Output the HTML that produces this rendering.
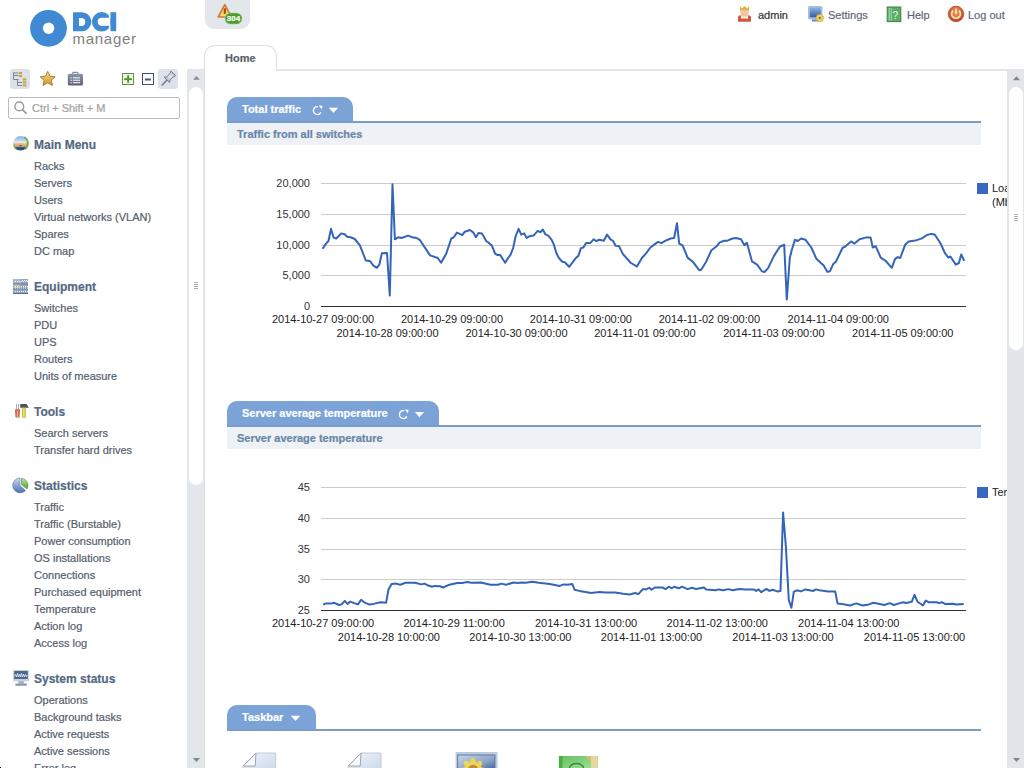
<!DOCTYPE html>
<html><head><meta charset="utf-8">
<style>
*{margin:0;padding:0;box-sizing:border-box}
html,body{width:1024px;height:768px;overflow:hidden;background:#fff;font-family:"Liberation Sans",sans-serif}
.a{position:absolute}
.t{position:absolute;white-space:nowrap;line-height:17px;font-size:11px;-webkit-text-stroke:0.2px currentColor}
.mi{color:#545e6c;left:34px}
.mh{color:#546983;left:34px;font-weight:bold;font-size:12px}
.hd{color:#5d6878;font-size:11px}
</style></head><body>
<!-- logo -->

<div class="t" style="left:72.5px;top:30px;font-size:15px;line-height:18px;color:#808080;letter-spacing:0.72px;-webkit-text-stroke:0">manager</div>

<!-- alert tab -->
<div class="a" style="left:205px;top:0;width:45px;height:29px;background:#e3e7ec;border-radius:0 0 9px 9px"></div>

<!-- top right -->
<div class="t" style="left:758px;top:7px;color:#333">admin</div>
<div class="t hd" style="left:828px;top:7px">Settings</div>
<div class="t hd" style="left:907px;top:7px">Help</div>
<div class="t hd" style="left:968px;top:7px">Log out</div>

<!-- sidebar toolbar -->
<div class="a" style="left:10px;top:69px;width:20px;height:20px;border-radius:3px;background:#dde2ea"></div>
<div class="a" style="left:158px;top:69px;width:20px;height:20px;border-radius:3px;background:#dde2ea"></div>
<div class="a" style="left:122px;top:73px;width:12px;height:12px;border:1px solid #668a4a;background:#f0f8ec"></div>
<div class="a" style="left:142px;top:73px;width:12px;height:12px;border:1px solid #3d5170;background:#fff"></div>
<!-- search -->
<div class="a" style="left:8px;top:97px;width:172px;height:22px;border:1px solid #bcbcbc;border-radius:2px"></div>
<div class="t" style="left:32px;top:100px;color:#a0a0a0">Ctrl + Shift + M</div>

<!-- menu -->
<div class="t mh" style="top:137px">Main Menu</div>
<div class="t mi" style="top:158px">Racks</div>
<div class="t mi" style="top:175px">Servers</div>
<div class="t mi" style="top:192px">Users</div>
<div class="t mi" style="top:209px">Virtual networks (VLAN)</div>
<div class="t mi" style="top:226px">Spares</div>
<div class="t mi" style="top:243px">DC map</div>

<div class="t mh" style="top:279px">Equipment</div>
<div class="t mi" style="top:300px">Switches</div>
<div class="t mi" style="top:317px">PDU</div>
<div class="t mi" style="top:334px">UPS</div>
<div class="t mi" style="top:351px">Routers</div>
<div class="t mi" style="top:368px">Units of measure</div>

<div class="t mh" style="top:404px">Tools</div>
<div class="t mi" style="top:425px">Search servers</div>
<div class="t mi" style="top:442px">Transfer hard drives</div>

<div class="t mh" style="top:478px">Statistics</div>
<div class="t mi" style="top:499px">Traffic</div>
<div class="t mi" style="top:516px">Traffic (Burstable)</div>
<div class="t mi" style="top:533px">Power consumption</div>
<div class="t mi" style="top:550px">OS installations</div>
<div class="t mi" style="top:567px">Connections</div>
<div class="t mi" style="top:584px">Purchased equipment</div>
<div class="t mi" style="top:601px">Temperature</div>
<div class="t mi" style="top:618px">Action log</div>
<div class="t mi" style="top:635px">Access log</div>

<div class="t mh" style="top:671px">System status</div>
<div class="t mi" style="top:692px">Operations</div>
<div class="t mi" style="top:709px">Background tasks</div>
<div class="t mi" style="top:726px">Active requests</div>
<div class="t mi" style="top:743px">Active sessions</div>
<div class="t mi" style="top:760px">Error log</div>

<!-- left scrollbar -->
<div class="a" style="left:187px;top:69px;width:17px;height:699px;background:#e3e7ec"></div>
<div class="a" style="left:189px;top:87px;width:14px;height:398px;background:#fff;border-radius:7px"></div>

<!-- home tab -->
<div class="a" style="left:204px;top:45px;width:73px;height:26px;border:1px solid #dcdfe3;border-bottom:none;border-radius:11px 11px 0 0;background:#fff"></div>
<div class="a" style="left:276px;top:69px;width:748px;height:2px;background:#e2e4e8"></div>
<div class="a" style="left:204px;top:69px;width:1px;height:699px;background:#dcdfe3"></div>
<div class="t" style="left:225px;top:50px;font-weight:bold;color:#5a616c">Home</div>

<!-- CHARTS -->
<svg class="a" style="left:0;top:0" width="1007" height="768" viewBox="0 0 1007 768" font-family="Liberation Sans, sans-serif" font-size="11">
<line x1="321" y1="183.5" x2="966" y2="183.5" stroke="#cccccc" stroke-width="1"/>
<line x1="321" y1="214.5" x2="966" y2="214.5" stroke="#cccccc" stroke-width="1"/>
<line x1="321" y1="245.5" x2="966" y2="245.5" stroke="#cccccc" stroke-width="1"/>
<line x1="321" y1="275.5" x2="966" y2="275.5" stroke="#cccccc" stroke-width="1"/>
<line x1="321" y1="306.5" x2="966" y2="306.5" stroke="#333333" stroke-width="1"/>
<text x="310" y="187" text-anchor="end" fill="#333">20,000</text>
<text x="310" y="218" text-anchor="end" fill="#333">15,000</text>
<text x="310" y="249" text-anchor="end" fill="#333">10,000</text>
<text x="310" y="279" text-anchor="end" fill="#333">5,000</text>
<text x="310" y="310" text-anchor="end" fill="#333">0</text>
<text x="272.0" y="323" fill="#222">2014-10-27 09:00:00</text>
<text x="336.4" y="337" fill="#222">2014-10-28 09:00:00</text>
<text x="400.9" y="323" fill="#222">2014-10-29 09:00:00</text>
<text x="465.4" y="337" fill="#222">2014-10-30 09:00:00</text>
<text x="529.8" y="323" fill="#222">2014-10-31 09:00:00</text>
<text x="594.2" y="337" fill="#222">2014-11-01 09:00:00</text>
<text x="658.7" y="323" fill="#222">2014-11-02 09:00:00</text>
<text x="723.2" y="337" fill="#222">2014-11-03 09:00:00</text>
<text x="787.6" y="323" fill="#222">2014-11-04 09:00:00</text>
<text x="852.1" y="337" fill="#222">2014-11-05 09:00:00</text>
<path d="M322.6 248.7 L326.0 243.6 L328.5 241.0 L331.0 228.8 L333.6 237.6 L336.2 238.5 L341.2 233.4 L344.6 234.3 L347.2 236.8 L350.6 237.3 L354.8 239.0 L359.9 245.3 L365.8 260.5 L370.0 261.0 L373.4 265.6 L376.8 267.8 L379.3 264.7 L381.9 253.2 L387.0 252.9 L389.8 295.6 L392.5 184.3 L394.9 239.3 L398.0 237.3 L401.4 238.0 L408.1 235.6 L413.2 237.6 L416.6 238.0 L420.0 240.2 L430.1 255.4 L437.8 258.0 L441.1 262.7 L446.2 253.7 L451.3 238.5 L453.8 237.3 L456.9 232.6 L462.3 235.1 L464.8 231.7 L470.0 230.0 L473.4 232.6 L475.9 237.3 L478.5 232.9 L481.9 233.4 L483.5 236.0 L486.1 241.0 L488.6 242.7 L492.0 245.8 L495.1 253.7 L497.1 254.9 L500.1 254.9 L505.2 262.7 L508.1 258.0 L510.6 254.6 L513.2 247.8 L515.7 236.0 L518.6 228.8 L521.3 234.6 L524.2 233.4 L526.7 238.0 L529.3 236.3 L533.5 235.6 L537.7 230.9 L540.3 232.2 L542.8 229.5 L545.3 234.3 L548.2 235.6 L551.3 239.3 L553.8 244.4 L556.4 253.2 L558.9 258.0 L562.3 261.7 L564.8 262.2 L569.1 266.8 L572.4 262.7 L575.8 258.0 L578.4 255.9 L580.9 248.1 L583.4 247.5 L586.0 243.1 L590.2 243.1 L593.6 239.3 L596.1 241.0 L599.5 239.7 L603.8 240.7 L607.1 234.6 L610.5 239.3 L613.1 241.0 L615.6 245.8 L619.0 246.1 L623.2 254.6 L625.0 256.3 L630.9 263.0 L636.9 266.4 L641.9 258.0 L646.2 253.2 L650.4 247.5 L654.6 244.4 L658.0 241.9 L661.4 243.1 L666.5 240.2 L670.7 238.5 L674.1 238.0 L677.0 223.3 L679.2 243.6 L682.6 245.3 L687.6 257.6 L692.7 261.7 L699.2 270.2 L701.2 269.8 L706.3 261.4 L711.4 250.3 L716.4 246.5 L719.8 242.4 L724.1 240.7 L727.4 240.7 L732.5 238.5 L735.9 238.0 L741.0 239.3 L744.4 245.3 L746.9 242.7 L752.0 261.4 L757.1 264.7 L762.1 271.5 L764.7 271.9 L768.1 268.1 L774.0 255.9 L780.0 246.5 L784.2 244.8 L786.8 299.5 L789.8 258.0 L791.9 249.5 L794.9 239.7 L797.8 241.0 L801.2 238.5 L805.4 239.7 L811.3 247.5 L816.4 258.8 L820.6 262.7 L823.7 265.6 L827.4 271.9 L830.0 271.2 L833.3 263.9 L835.9 261.7 L842.6 247.8 L845.2 246.5 L851.1 241.4 L854.5 243.6 L859.6 239.3 L865.5 237.6 L870.6 237.6 L872.8 247.5 L875.7 246.1 L880.7 257.6 L885.8 261.0 L891.8 267.8 L895.1 258.8 L897.7 257.1 L900.2 258.0 L905.3 244.4 L908.7 241.4 L915.2 240.6 L922.0 238.4 L927.0 235.0 L931.3 233.9 L934.7 234.5 L940.6 243.5 L944.8 252.8 L948.2 257.5 L950.4 256.5 L955.8 264.6 L958.9 263.0 L961.2 254.5 L964.3 260.9" fill="none" stroke="#3464b8" stroke-width="2" stroke-linejoin="round"/>
<rect x="977" y="183" width="11" height="11" fill="#3868c4"/>
<text x="992" y="192" fill="#222">Load</text>
<text x="992" y="206" fill="#222">(Mbit/s)</text>
<line x1="321" y1="487.5" x2="966" y2="487.5" stroke="#cccccc" stroke-width="1"/>
<line x1="321" y1="518.5" x2="966" y2="518.5" stroke="#cccccc" stroke-width="1"/>
<line x1="321" y1="549.5" x2="966" y2="549.5" stroke="#cccccc" stroke-width="1"/>
<line x1="321" y1="579.5" x2="966" y2="579.5" stroke="#cccccc" stroke-width="1"/>
<line x1="321" y1="610.5" x2="966" y2="610.5" stroke="#333333" stroke-width="1"/>
<text x="310" y="491" text-anchor="end" fill="#333">45</text>
<text x="310" y="522" text-anchor="end" fill="#333">40</text>
<text x="310" y="553" text-anchor="end" fill="#333">35</text>
<text x="310" y="583" text-anchor="end" fill="#333">30</text>
<text x="310" y="614" text-anchor="end" fill="#333">25</text>
<text x="272.0" y="627" fill="#222">2014-10-27 09:00:00</text>
<text x="337.8" y="641" fill="#222">2014-10-28 10:00:00</text>
<text x="403.5" y="627" fill="#222">2014-10-29 11:00:00</text>
<text x="469.3" y="641" fill="#222">2014-10-30 13:00:00</text>
<text x="535.0" y="627" fill="#222">2014-10-31 13:00:00</text>
<text x="600.8" y="641" fill="#222">2014-11-01 13:00:00</text>
<text x="666.6" y="627" fill="#222">2014-11-02 13:00:00</text>
<text x="732.3" y="641" fill="#222">2014-11-03 13:00:00</text>
<text x="798.1" y="627" fill="#222">2014-11-04 13:00:00</text>
<text x="863.8" y="641" fill="#222">2014-11-05 13:00:00</text>
<path d="M323.1 604.7 L325.9 603.4 L330.6 603.6 L333.8 602.7 L339.2 605.0 L341.6 604.4 L344.7 600.8 L347.5 603.9 L350.2 601.6 L354.1 603.1 L358.0 604.4 L361.1 599.7 L364.2 602.3 L368.9 604.4 L373.6 603.9 L380.6 602.3 L386.1 602.8 L388.4 589.8 L391.6 584.1 L396.3 583.6 L400.2 584.7 L405.6 582.8 L415.0 582.8 L421.3 584.4 L424.4 583.6 L427.5 585.2 L432.2 586.7 L434.5 585.9 L440.0 586.3 L443.1 587.5 L449.4 584.7 L457.2 583.1 L461.9 583.1 L467.3 582.0 L471.3 582.8 L480.9 582.5 L490.3 584.7 L498.1 584.7 L501.3 583.6 L505.9 584.7 L513.8 582.5 L517.7 583.1 L521.6 582.5 L525.5 582.8 L532.5 581.7 L538.8 582.8 L549.7 584.1 L559.8 585.9 L563.8 584.4 L567.7 584.7 L572.3 584.1 L574.7 589.8 L579.4 590.9 L585.6 591.9 L591.1 593.0 L595.0 592.5 L599.7 591.9 L605.9 592.5 L615.3 592.5 L623.1 593.8 L629.7 594.5 L635.2 593.0 L638.3 594.1 L643.0 589.1 L646.1 589.4 L649.2 587.8 L651.6 589.8 L654.7 587.5 L662.5 587.5 L665.6 589.1 L668.8 586.7 L671.9 588.3 L674.2 586.7 L678.9 588.3 L682.0 586.7 L687.5 589.1 L692.2 587.8 L696.1 589.1 L703.9 587.5 L706.2 589.4 L715.6 590.3 L718.8 589.4 L723.4 590.3 L728.1 589.1 L732.8 590.3 L739.1 589.1 L745.3 589.4 L753.9 589.4 L756.2 590.9 L758.6 589.4 L761.2 592.2 L766.4 588.8 L769.5 590.9 L772.7 589.8 L777.3 591.4 L780.5 590.9 L783.1 512.5 L785.9 546.9 L788.8 600.0 L791.4 607.8 L793.8 591.9 L796.9 590.3 L800.8 591.4 L805.5 589.4 L813.3 590.9 L815.9 589.4 L819.5 590.3 L828.1 591.4 L835.2 591.4 L837.5 603.4 L842.2 603.9 L850.0 605.5 L856.2 603.4 L862.5 605.5 L868.8 604.4 L873.4 602.8 L884.4 605.0 L889.8 603.1 L893.8 605.0 L900.0 603.1 L903.1 602.2 L906.2 603.0 L911.7 601.8 L914.5 594.8 L917.6 601.8 L923.0 605.5 L925.8 600.6 L928.5 602.2 L936.7 602.2 L939.0 603.1 L941.8 602.2 L944.9 603.9 L953.1 603.8 L956.2 604.4 L963.7 604.1" fill="none" stroke="#3464b8" stroke-width="2" stroke-linejoin="round"/>
<rect x="977" y="487" width="11" height="11" fill="#3868c4"/>
<text x="992" y="496" fill="#222">Temperature</text>
</svg>
<!-- /CHARTS -->
<!-- right scrollbar -->
<div class="a" style="left:1007px;top:71px;width:17px;height:697px;background:#e2e6eb"></div>
<div class="a" style="left:1009px;top:87px;width:14px;height:263px;background:#fff;border-radius:7px"></div>
<svg class="a" style="left:1007px;top:71px" width="17" height="697" viewBox="1007 71 17 697">
 <path d="M1012.9 80.2L1016.5 76.2L1020.1 80.2Z" fill="#7c8793"/>
 <path d="M1012.9 758L1020.1 758L1016.5 762Z" fill="#7c8793"/>
 <g fill="#9a9a9a"><rect x="1014" y="214" width="4" height="0.8"/><rect x="1014" y="216" width="4" height="0.8"/><rect x="1014" y="218" width="4" height="0.8"/><rect x="1014" y="220" width="4" height="0.8"/></g>
</svg>

<!-- panel 1 -->
<div class="a" style="left:227px;top:97px;width:126px;height:25px;background:#7ba3d8;border-radius:10px 10px 0 0"></div>
<div class="a" style="left:227px;top:121px;width:754px;height:2px;background:#7b9ccb"></div>
<div class="a" style="left:227px;top:123px;width:754px;height:22px;background:#eef1f5"></div>
<div class="t" style="left:242px;top:101px;color:#fff;font-weight:bold">Total traffic</div>
<div class="t" style="left:237px;top:126px;color:#6a85a6;font-weight:bold">Traffic from all switches</div>

<!-- panel 2 -->
<div class="a" style="left:227px;top:401px;width:212px;height:25px;background:#7ba3d8;border-radius:10px 10px 0 0"></div>
<div class="a" style="left:227px;top:425px;width:754px;height:2px;background:#7b9ccb"></div>
<div class="a" style="left:227px;top:427px;width:754px;height:22px;background:#eef1f5"></div>
<div class="t" style="left:242px;top:405px;color:#fff;font-weight:bold">Server average temperature</div>
<div class="t" style="left:237px;top:430px;color:#6a85a6;font-weight:bold">Server average temperature</div>

<!-- taskbar -->
<div class="a" style="left:227px;top:705px;width:89px;height:25px;background:#7ba3d8;border-radius:10px 10px 0 0"></div>
<div class="a" style="left:227px;top:729px;width:754px;height:2px;background:#7b9ccb"></div>
<div class="t" style="left:242px;top:709px;color:#fff;font-weight:bold">Taskbar</div>

<svg class="a" style="left:0;top:0" width="1006" height="768" viewBox="0 0 1006 768">
<path d="M320.84 112.43A3.9 3.9 0 1 1 318.08 106.76" fill="none" stroke="#fff" stroke-width="1.3"/><path d="M318.70 105.50L322.50 105.80L322.00 109.40Z" fill="#fff"/>
<path d="M406.84 416.43A3.9 3.9 0 1 1 404.08 410.76" fill="none" stroke="#fff" stroke-width="1.3"/><path d="M404.70 409.50L408.50 409.80L408.00 413.40Z" fill="#fff"/>
 <g fill="#fff"><path d="M328.8 107.8H338.1L333.45 113Z"/><path d="M414.9 412H424L419.45 417.2Z"/><path d="M290.8 715.8H300.2L295.5 721Z"/></g>
</svg>
<!-- /TABICONS -->
<!-- TASK -->
<svg class="a" style="left:230px;top:745px" width="380" height="23" viewBox="230 745 380 23">
 <defs>
  <linearGradient id="gdoc" x1="0" y1="0" x2="1" y2="1"><stop offset="0" stop-color="#eef3fa"/><stop offset="1" stop-color="#cdd9ea"/></linearGradient>
  <linearGradient id="gscr" x1="0" y1="0" x2="1" y2="1"><stop offset="0" stop-color="#c8d6ea"/><stop offset="0.6" stop-color="#8aa4c6"/><stop offset="1" stop-color="#3d6496"/></linearGradient>
  <linearGradient id="gbook" x1="0" y1="0" x2="1" y2="1"><stop offset="0" stop-color="#62c060"/><stop offset="1" stop-color="#a6e49c"/></linearGradient>
 </defs>
 <path d="M256 753H275.7V770H243V766Z" fill="url(#gdoc)" stroke="#b8c2d0" stroke-width="0.8"/>
 <path d="M256 753L243.2 766H255.2Z" fill="#f8f9fb" stroke="#8a929e" stroke-width="0.8"/>
 <path d="M361 753H381V770H348.2V766Z" fill="url(#gdoc)" stroke="#b8c2d0" stroke-width="0.8"/>
 <path d="M361 753L348.4 766H360.2Z" fill="#f8f9fb" stroke="#8a929e" stroke-width="0.8"/>
 <rect x="455.6" y="752.1" width="41.9" height="20" rx="1.2" fill="#bcc8de"/>
 <rect x="457.7" y="755" width="37.2" height="15" fill="url(#gscr)" stroke="#4f6a92" stroke-width="0.8"/>
 <g fill="#ecd65a"><circle cx="473.0" cy="760.5" r="2.6"/><circle cx="479.7" cy="763.3" r="2.6"/><circle cx="482.5" cy="770.0" r="2.6"/><circle cx="479.7" cy="776.7" r="2.6"/><circle cx="473.0" cy="779.5" r="2.6"/><circle cx="466.3" cy="776.7" r="2.6"/><circle cx="463.5" cy="770.0" r="2.6"/><circle cx="466.3" cy="763.3" r="2.6"/><circle cx="473" cy="770" r="9"/></g>
 <circle cx="473" cy="770" r="5.2" fill="#c08840"/>
 <path d="M576 755.9H598V770H558.8V755.9Z" fill="url(#gbook)"/>
 <rect x="559" y="755.9" width="3.5" height="14" fill="#4fa84a"/>
 <rect x="591" y="755.9" width="6.7" height="14" fill="#e6d6a0"/>
 <path d="M585 755.9L591 761.5V755.9Z" fill="#d8c070"/>
 <ellipse cx="576.5" cy="768" rx="7" ry="4.5" fill="none" stroke="#3d8a3a" stroke-width="1.4"/>
</svg>
<!-- /TASK -->
<!-- ICONS -->
<svg class="a" style="left:0;top:0" width="1024" height="100" viewBox="0 0 1024 100">
 <defs>
  <linearGradient id="gstar" x1="0" y1="0" x2="0" y2="1"><stop offset="0" stop-color="#f6d77a"/><stop offset="1" stop-color="#d49a2c"/></linearGradient>
  <linearGradient id="gcase" x1="0" y1="0" x2="0" y2="1"><stop offset="0" stop-color="#8d97aa"/><stop offset="1" stop-color="#596277"/></linearGradient>
  <linearGradient id="gpin" x1="1" y1="0" x2="0" y2="1"><stop offset="0" stop-color="#a4aab4"/><stop offset="0.5" stop-color="#e6e9ee"/><stop offset="1" stop-color="#8a909a"/></linearGradient>
  <radialGradient id="glog" cx="0.5" cy="0.4" r="0.6"><stop offset="0" stop-color="#eaa070"/><stop offset="0.6" stop-color="#d46a3c"/><stop offset="1" stop-color="#b8402a"/></radialGradient>
  <linearGradient id="gmon" x1="0" y1="0" x2="0" y2="1"><stop offset="0" stop-color="#8eb2e0"/><stop offset="1" stop-color="#2f5c9c"/></linearGradient>
 </defs>
 <!-- logo -->
 <circle cx="48.5" cy="28.3" r="18.4" fill="#3f8ad3"/>
 <circle cx="48.6" cy="28.3" r="5.7" fill="#fff"/>
 <path fill="#3f8ad3" fill-rule="evenodd" d="M73 12.2H81.8A9.5 9.5 0 0 1 81.8 31.2H73Z M79 17.9H81.3A4 4 0 0 1 81.3 25.9H79Z"/>
 <circle cx="101.6" cy="21.8" r="9.7" fill="#3f8ad3"/>
 <circle cx="101.8" cy="21.8" r="4.1" fill="#fff"/>
 <rect x="101.8" y="17.8" width="8" height="8" fill="#fff"/>
 <rect x="108.9" y="10" width="1.6" height="24" fill="#fff"/>
 <rect x="110.5" y="12.2" width="5.7" height="19" fill="#3f8ad3"/>
 <!-- alert triangle -->
 <path d="M224.8 4.6L231.4 17H218.2Z" fill="#f6d870" stroke="#cf7a30" stroke-width="1.6" stroke-linejoin="round"/>
 <rect x="223.7" y="8.3" width="2.3" height="5.5" fill="#a4521c"/>
 <rect x="225" y="13" width="17" height="11" rx="5.5" fill="#4b9b30" stroke="#9ad48a" stroke-width="0.6"/>
 <text x="233.5" y="21.4" text-anchor="middle" font-size="8" font-weight="bold" fill="#f4fff0" stroke="#f4fff0" stroke-width="0.25">304</text>
 <!-- king -->
 <path d="M740 6L742 8.5L744.5 6L747 8.5L749 6V10.8H740Z" fill="#e0b040"/>
 <path d="M740.5 10.8H748.5V14.5Q744.5 19 740.5 14.5Z" fill="#f0c8a0"/>
 <path d="M738 21.8V17.5Q738 15.2 741 15.2L744.5 18.5L748 15.2Q751 15.2 751 17.5V21.8Z" fill="#d2583c"/>
 <path d="M741 15.5L744.5 18.5L748 15.5V18.5H741Z" fill="#fff"/>
 <!-- settings -->
 <rect x="808" y="6" width="14.5" height="13.5" rx="1.5" fill="#a8bde0"/>
 <rect x="809.8" y="7.8" width="11" height="9.5" fill="url(#gmon)"/>
 <rect x="812" y="19.5" width="7" height="2" fill="#6f86b0"/>
 <circle cx="819.8" cy="18" r="3.8" fill="#e8d060" stroke="#a89030" stroke-width="0.8" stroke-dasharray="1.2 0.9"/>
 <circle cx="819.8" cy="18" r="1.1" fill="#7a6a20"/>
 <!-- help -->
 <rect x="887.2" y="7" width="13.6" height="14.6" fill="#5cad68" stroke="#3d8048" stroke-width="1"/>
 <rect x="888.8" y="8" width="0.8" height="12.6" fill="#b8e6be"/>
 <rect x="890.8" y="8" width="0.8" height="12.6" fill="#b8e6be"/>
 <text x="895.3" y="18.5" text-anchor="middle" font-size="10" fill="#e6ffe8">?</text>
 <!-- logout -->
 <circle cx="956" cy="13.9" r="7.8" fill="url(#glog)" stroke="#a83c28" stroke-width="0.6"/>
 <path d="M953 10.6A4.4 4.4 0 1 0 959 10.6" fill="none" stroke="#ffe8b0" stroke-width="1.6"/>
 <rect x="955.2" y="8.6" width="1.6" height="5.6" fill="#ffe8b0"/>
 <!-- tree -->
 <g stroke="#7f8792" stroke-width="1" fill="none">
  <path d="M13.5 72.5V79.5H18.5 M13.5 75.5H18.5 M13.5 73H18.5 M17.5 79.5V85.5H22 M17.5 82.5H22"/>
 </g>
 <g fill="#c9a93a">
  <rect x="19" y="72" width="3" height="2.2"/><rect x="19" y="75" width="3" height="2.2"/>
  <rect x="22.8" y="78.3" width="3.6" height="2.2"/><rect x="22.8" y="81.3" width="3.6" height="2.2"/><rect x="22.8" y="84.3" width="3.6" height="2.2"/>
 </g>
 <!-- star -->
 <path d="M47.7 71.3L50 76.2L55.2 76.8L51.3 80.3L52.4 85.4L47.7 82.8L43 85.4L44.1 80.3L40.2 76.8L45.4 76.2Z" fill="url(#gstar)" stroke="#9a7430" stroke-width="0.9" stroke-linejoin="round"/>
 <!-- briefcase -->
 <path d="M72.8 74V72.3H77.9V74" fill="none" stroke="#6b7488" stroke-width="1"/>
 <rect x="67.8" y="73.8" width="15.2" height="11.7" rx="1.5" fill="url(#gcase)"/>
 <g fill="#eef0f5"><rect x="70.5" y="77.3" width="1.2" height="1.2"/><rect x="70.5" y="79.7" width="1.2" height="1.2"/><rect x="70.5" y="82.1" width="1.2" height="1.2"/>
 <rect x="72.8" y="77.3" width="7.2" height="1.1"/><rect x="72.8" y="79.7" width="7.2" height="1.1"/><rect x="72.8" y="82.1" width="7.2" height="1.1"/></g>
 <!-- plus/minus -->
 <rect x="127.2" y="75.2" width="1.9" height="7.6" fill="#4b9a2a"/>
 <rect x="124.2" y="78.2" width="7.8" height="1.9" fill="#4b9a2a"/>
 <rect x="144.9" y="78.5" width="6" height="2" fill="#3d5a85"/>
 <path d="M192.9 79.8L196.4 76L199.9 79.8Z" fill="#838e9b"/>
 <!-- pin -->
 <path d="M162.2 85L166.8 80.2" stroke="#6f7682" stroke-width="1.4" stroke-linecap="round"/>
 <path d="M164.2 77.2L167.2 76.6L170.6 72.6L170.3 71.8L171.2 71.2L175.6 75.6L175 76.5L174.2 76.2L170.2 79.6L169.6 82.6Z" fill="url(#gpin)" stroke="#6b717c" stroke-width="0.9" stroke-linejoin="round"/>
</svg>
<svg class="a" style="left:0;top:100px" width="200" height="668" viewBox="0 100 200 668">
 <defs>
  <linearGradient id="gglobe" x1="0" y1="0" x2="0" y2="1"><stop offset="0" stop-color="#7fb0e0"/><stop offset="0.38" stop-color="#c6e0f4"/><stop offset="0.42" stop-color="#ead7b0"/><stop offset="0.72" stop-color="#d2a060"/><stop offset="0.76" stop-color="#2d5896"/><stop offset="1" stop-color="#1f4a88"/></linearGradient>
  <linearGradient id="gpie" x1="0" y1="0" x2="0" y2="1"><stop offset="0" stop-color="#cfdcf4"/><stop offset="1" stop-color="#4a70b0"/></linearGradient>
  <linearGradient id="gpieg" x1="0" y1="0" x2="0" y2="1"><stop offset="0" stop-color="#b8eca0"/><stop offset="1" stop-color="#50a038"/></linearGradient>
 </defs>
 <circle cx="19.3" cy="106.4" r="4.4" fill="none" stroke="#9a9a9a" stroke-width="1.4"/>
 <path d="M22.6 109.8L26 113.2" stroke="#9a9a9a" stroke-width="1.8" stroke-linecap="round"/>
 <!-- globe -->
 <circle cx="20.6" cy="143.3" r="7.3" fill="url(#gglobe)"/>
 <rect x="14" y="141.6" width="12" height="1" fill="#f4f4f0" opacity="0.9"/>
 <ellipse cx="20.6" cy="145.6" rx="1.5" ry="0.7" fill="#3a3020" opacity="0.7"/>
 <path d="M24.2 137A7.3 7.3 0 0 1 25 149.2" fill="none" stroke="#6aa040" stroke-width="1.8" opacity="0.85"/>
 <path d="M13.8 144.5A7.3 7.3 0 0 0 17 149.8" fill="none" stroke="#6aa040" stroke-width="1.5" opacity="0.75"/>
 <!-- equipment -->
 <rect x="13" y="279" width="15" height="15" fill="#93a3c2"/>
 <rect x="13" y="279" width="8" height="4.5" fill="#a7b4cc"/>
 <rect x="13" y="284" width="7" height="4" fill="#b8bfa8"/>
 <rect x="13" y="283.5" width="15" height="0.9" fill="#6c7d9c"/><rect x="13" y="288.5" width="15" height="0.9" fill="#6c7d9c"/><rect x="13" y="293" width="15" height="1" fill="#5d6d8c"/>
 <g fill="#f4f7fc"><rect x="15" y="281" width="1" height="1"/><rect x="17" y="281" width="1" height="1"/><rect x="19" y="281" width="1" height="1"/><rect x="21" y="281" width="1" height="1"/><rect x="23" y="281" width="1" height="1"/><rect x="25" y="281" width="1" height="1"/><rect x="27" y="281" width="1" height="1"/><rect x="15" y="286" width="1" height="1"/><rect x="17" y="286" width="1" height="1"/><rect x="19" y="286" width="1" height="1"/><rect x="21" y="286" width="1" height="1"/><rect x="23" y="286" width="1" height="1"/><rect x="25" y="286" width="1" height="1"/><rect x="27" y="286" width="1" height="1"/><rect x="15" y="291" width="1" height="1"/><rect x="17" y="291" width="1" height="1"/><rect x="19" y="291" width="1" height="1"/><rect x="21" y="291" width="1" height="1"/><rect x="23" y="291" width="1" height="1"/><rect x="25" y="291" width="1" height="1"/><rect x="27" y="291" width="1" height="1"/><rect x="22" y="280" width="1" height="1"/><rect x="24" y="280" width="1" height="1"/><rect x="26" y="280" width="1" height="1"/><rect x="15" y="287.5" width="1" height="1"/><rect x="17" y="287.5" width="1" height="1"/><rect x="19" y="287.5" width="1" height="1"/><rect x="21" y="287.5" width="1" height="1"/><rect x="23" y="287.5" width="1" height="1"/><rect x="25" y="287.5" width="1" height="1"/><rect x="27" y="287.5" width="1" height="1"/></g>
 <!-- tools -->
 <rect x="16" y="404" width="0.9" height="5.5" fill="#9aa4b4"/><rect x="18" y="404" width="0.9" height="5.5" fill="#9aa4b4"/>
 <path d="M15 409.3H20V411L19.5 417.5H15.5L15 411Z" fill="#d66a50"/>
 <rect x="16.9" y="411" width="1.2" height="6" fill="#f0a890"/>
 <path d="M20.2 404H26.5L28.8 407.7H20.2Z" fill="#4b5260"/>
 <rect x="22" y="407.8" width="3.9" height="9.9" rx="0.6" fill="#c8c040"/>
 <rect x="23.2" y="408.5" width="1.3" height="8.5" fill="#ece870"/>
 <!-- statistics pie -->
 <path d="M20 478V485.5L25.5 490.5A7.4 7.4 0 1 1 20 478Z" fill="url(#gpie)" stroke="#5a78a8" stroke-width="0.6"/>
 <path d="M21.5 478.2A7.2 7.2 0 0 1 27 489L21.5 484.5Z" fill="url(#gpieg)" stroke="#4a8a38" stroke-width="0.6"/>
 <!-- system status -->
 <rect x="13.2" y="670" width="15.6" height="11.3" fill="#c4cfdf"/>
 <rect x="14.2" y="671" width="13.6" height="8" fill="#4c6a8e"/>
 <path d="M14.5 676L15.5 674.5L16.5 677L17.5 673.5L18.5 677L19.5 674L20.5 677L21.5 673.5L22.5 677L23.5 674L24.5 677L25.5 674.5L26.5 676.5L27.5 675" fill="none" stroke="#e8f0f0" stroke-width="0.8"/>
 <rect x="18.3" y="681.3" width="5.5" height="2.2" fill="#9aa6b6"/>
 <rect x="15.2" y="683.5" width="11.8" height="2.2" rx="1" fill="#8a96a8"/>
 <!-- left scroll arrows & grip -->
 <path d="M192.8 758L200 758L196.4 762Z" fill="#7c8793"/>
 <g fill="#9a9a9a"><rect x="194" y="282" width="4" height="0.8"/><rect x="194" y="284" width="4" height="0.8"/><rect x="194" y="286" width="4" height="0.8"/><rect x="194" y="288" width="4" height="0.8"/></g>
</svg>
<!-- /ICONS -->
<div class="a" style="left:0;top:767px;width:1px;height:1px;background:#000"></div>
</body></html>
